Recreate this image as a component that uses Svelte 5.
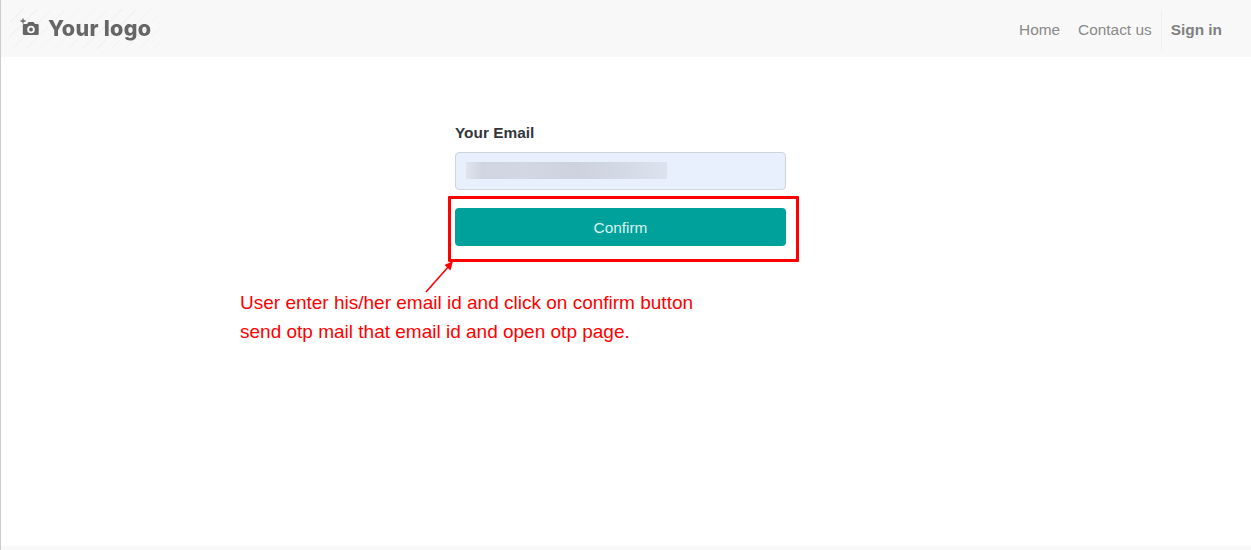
<script>
  const links = ["Home", "Contact us"];
</script>

<div class="page">
  <header class="topbar">
    <div class="brand">
      <div class="hatch"></div>
      <svg class="cam" width="20" height="20" viewBox="0 0 20 20" aria-hidden="true">
        <path d="M0.5 3h5M3 0.5v5" stroke="#666" stroke-width="1.300" fill="none" />
        <path fill="#666" fill-rule="evenodd" d="M4 6h3L8.500 4h5L15 6h2.500a1.200 1.200 0 0 1 1.200 1.200v8.600a1.200 1.200 0 0 1-1.200 1.200H4a1.200 1.200 0 0 1-1.200-1.200V7.200A1.200 1.200 0 0 1 4 6zm7 1.700a3.800 3.800 0 1 0 0 7.600 3.800 3.800 0 0 0 0-7.600zm0 1.900a1.900 1.900 0 1 1 0 3.800 1.900 1.900 0 0 1 0-3.800z" />
      </svg>
      <span class="logo-text">Your logo</span>
    </div>
    <nav class="nav">
      {#each links as link}
        <a class="link" href="#top">{link}</a>
      {/each}
      <a class="link signin" href="#top">Sign in</a>
    </nav>
  </header>

  <main class="main">
    <form class="form">
      <label class="label" for="email">Your Email</label>
      <div class="input" id="email"><div class="redact"></div></div>
      <button class="confirm" type="button">Confirm</button>
    </form>
  </main>

  <footer class="foot"></footer>

  <div class="highlight"></div>
  <svg class="arrow" width="40" height="40" viewBox="0 0 40 40" aria-hidden="true">
    <path d="M4 33 L27 7" stroke="#f00" stroke-width="1.600" fill="none" />
    <path d="M31 2 L28.500 11.500 L22.500 6 Z" fill="#f00" />
  </svg>
  <p class="note">User enter his/her email id and click on confirm button<br />send otp mail that email id and open otp page.</p>
</div>

<style>
  :global(body) {
    margin: 0;
    background: #fff;
  }
  .page {
    position: relative;
    box-sizing: border-box;
    width: 1251px;
    height: 550px;
    border-left: 1px solid #ccc;
    display: flex;
    flex-direction: column;
    font-family: "Liberation Sans", Arial, sans-serif;
    overflow: hidden;
  }
  .topbar {
    height: 57px;
    flex: none;
    background: #f8f8f8;
    display: flex;
    justify-content: space-between;
    align-items: center;
    padding: 0 29px 0 19px;
  }
  .brand {
    position: relative;
    display: flex;
    align-items: center;
    gap: 8px;
    height: 40px;
  }
  .hatch {
    position: absolute;
    left: -10px;
    top: 0;
    width: 152px;
    height: 40px;
    background: repeating-linear-gradient(135deg, transparent 0 9px, #f2f2f2 9px 10px);
  }
  .cam {
    position: relative;
    margin-top: -2px;
    filter: blur(0.3px);
  }
  .logo-text {
    position: relative;
    font-family: "Inter", sans-serif;
    font-weight: 800;
    font-size: 21.5px;
    letter-spacing: 0.3px;
    color: #666;
    filter: blur(0.4px);
    margin-top: -1px;
  }
  .nav {
    display: flex;
    align-items: center;
    height: 40px;
    margin-top: 3px;
  }
  .link {
    font-size: 15.4px;
    color: #8a8a8a;
    text-decoration: none;
    margin-left: 18px;
  }
  .signin {
    font-weight: 700;
    margin-left: 9px;
    padding-left: 9px;
    height: 40px;
    line-height: 40px;
    border-left: 1px solid #f0f0f0;
    color: #808080;
  }
  .main {
    flex: 1;
    padding: 67px 0 0 454px;
  }
  .form {
    width: 331px;
    display: flex;
    flex-direction: column;
  }
  .label {
    font-size: 15.4px;
    font-weight: 700;
    color: #33363d;
    line-height: 18px;
    margin-bottom: 10px;
  }
  .input {
    box-sizing: border-box;
    height: 38px;
    background: #e8f0fe;
    border: 1px solid #ced4da;
    border-radius: 4px;
    padding: 9px 10px;
  }
  .redact {
    width: 201px;
    height: 17px;
    background: linear-gradient(90deg, #dfe4ee 0, #d0d5e1 8%, #d2d7e3 30%, #cdd2de 55%, #d3d9e4 75%, #dde3ee 100%);
  }
  .confirm {
    margin-top: 18px;
    height: 38px;
    padding: 2px 0 0;
    background: #00a19b;
    color: #d9f2f0;
    border: 0;
    border-radius: 4px;
    font-family: inherit;
    font-size: 15.4px;
  }
  .foot {
    height: 4px;
    flex: none;
    background: #f8f8f8;
  }
  .highlight {
    position: absolute;
    left: 447px;
    top: 196px;
    width: 345px;
    height: 60px;
    border: 3px solid #f00;
    border-radius: 1px;
  }
  .arrow {
    position: absolute;
    left: 421px;
    top: 259px;
  }
  .note {
    position: absolute;
    left: 239px;
    top: 288px;
    margin: 0;
    font-size: 19px;
    line-height: 29px;
    color: #f00;
    white-space: nowrap;
  }
</style>
